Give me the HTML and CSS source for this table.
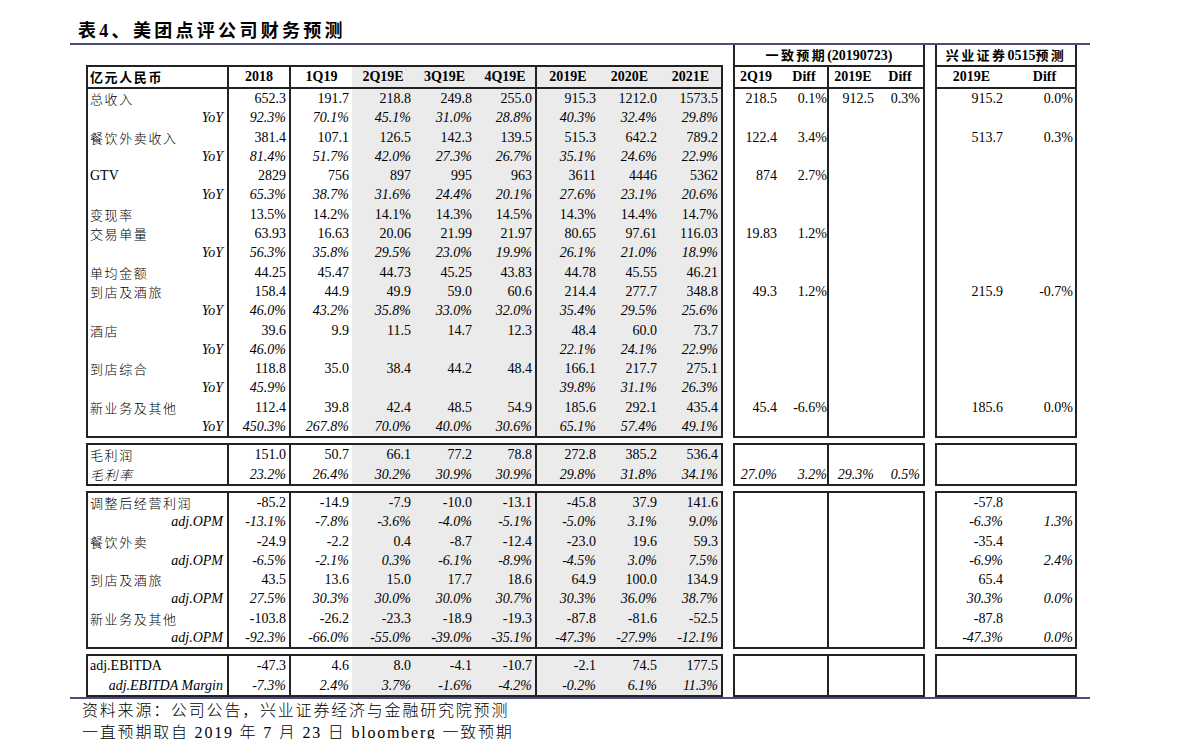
FILE: index.html
```html
<!DOCTYPE html>
<html lang="zh">
<head>
<meta charset="utf-8">
<title>表4、美团点评公司财务预测</title>
<link rel="stylesheet" href="styles.css">
</head>
<body>
<div class="page">
  <h1 class="title">表4、美团点评公司财务预测</h1>
  <div class="rule"></div>
  <div class="body">
    <div class="main">
      <div class="grid L">
        <div class="r h"><div><span class="c">亿元人民币</span></div><div>2018</div><div>1Q19</div><div>2Q19E</div><div>3Q19E</div><div>4Q19E</div><div>2019E</div><div>2020E</div><div>2021E</div></div>
        <div class="r"><div><span class="c">总收入</span></div><div>652.3</div><div>191.7</div><div>218.8</div><div>249.8</div><div>255.0</div><div>915.3</div><div>1212.0</div><div>1573.5</div></div>
        <div class="r y"><div>YoY</div><div>92.3%</div><div>70.1%</div><div>45.1%</div><div>31.0%</div><div>28.8%</div><div>40.3%</div><div>32.4%</div><div>29.8%</div></div>
        <div class="r"><div><span class="c">餐饮外卖收入</span></div><div>381.4</div><div>107.1</div><div>126.5</div><div>142.3</div><div>139.5</div><div>515.3</div><div>642.2</div><div>789.2</div></div>
        <div class="r y"><div>YoY</div><div>81.4%</div><div>51.7%</div><div>42.0%</div><div>27.3%</div><div>26.7%</div><div>35.1%</div><div>24.6%</div><div>22.9%</div></div>
        <div class="r"><div>GTV</div><div>2829</div><div>756</div><div>897</div><div>995</div><div>963</div><div>3611</div><div>4446</div><div>5362</div></div>
        <div class="r y"><div>YoY</div><div>65.3%</div><div>38.7%</div><div>31.6%</div><div>24.4%</div><div>20.1%</div><div>27.6%</div><div>23.1%</div><div>20.6%</div></div>
        <div class="r"><div><span class="c">变现率</span></div><div>13.5%</div><div>14.2%</div><div>14.1%</div><div>14.3%</div><div>14.5%</div><div>14.3%</div><div>14.4%</div><div>14.7%</div></div>
        <div class="r"><div><span class="c">交易单量</span></div><div>63.93</div><div>16.63</div><div>20.06</div><div>21.99</div><div>21.97</div><div>80.65</div><div>97.61</div><div>116.03</div></div>
        <div class="r y"><div>YoY</div><div>56.3%</div><div>35.8%</div><div>29.5%</div><div>23.0%</div><div>19.9%</div><div>26.1%</div><div>21.0%</div><div>18.9%</div></div>
        <div class="r"><div><span class="c">单均金额</span></div><div>44.25</div><div>45.47</div><div>44.73</div><div>45.25</div><div>43.83</div><div>44.78</div><div>45.55</div><div>46.21</div></div>
        <div class="r"><div><span class="c">到店及酒旅</span></div><div>158.4</div><div>44.9</div><div>49.9</div><div>59.0</div><div>60.6</div><div>214.4</div><div>277.7</div><div>348.8</div></div>
        <div class="r y"><div>YoY</div><div>46.0%</div><div>43.2%</div><div>35.8%</div><div>33.0%</div><div>32.0%</div><div>35.4%</div><div>29.5%</div><div>25.6%</div></div>
        <div class="r"><div><span class="c">酒店</span></div><div>39.6</div><div>9.9</div><div>11.5</div><div>14.7</div><div>12.3</div><div>48.4</div><div>60.0</div><div>73.7</div></div>
        <div class="r y"><div>YoY</div><div>46.0%</div><div></div><div></div><div></div><div></div><div>22.1%</div><div>24.1%</div><div>22.9%</div></div>
        <div class="r"><div><span class="c">到店综合</span></div><div>118.8</div><div>35.0</div><div>38.4</div><div>44.2</div><div>48.4</div><div>166.1</div><div>217.7</div><div>275.1</div></div>
        <div class="r y"><div>YoY</div><div>45.9%</div><div></div><div></div><div></div><div></div><div>39.8%</div><div>31.1%</div><div>26.3%</div></div>
        <div class="r"><div><span class="c">新业务及其他</span></div><div>112.4</div><div>39.8</div><div>42.4</div><div>48.5</div><div>54.9</div><div>185.6</div><div>292.1</div><div>435.4</div></div>
        <div class="r y"><div>YoY</div><div>450.3%</div><div>267.8%</div><div>70.0%</div><div>40.0%</div><div>30.6%</div><div>65.1%</div><div>57.4%</div><div>49.1%</div></div>
      </div>

      <div class="grid L">
        <div class="r"><div><span class="c">毛利润</span></div><div>151.0</div><div>50.7</div><div>66.1</div><div>77.2</div><div>78.8</div><div>272.8</div><div>385.2</div><div>536.4</div></div>
        <div class="r y yl"><div><span class="c">毛利率</span></div><div>23.2%</div><div>26.4%</div><div>30.2%</div><div>30.9%</div><div>30.9%</div><div>29.8%</div><div>31.8%</div><div>34.1%</div></div>
      </div>

      <div class="grid L">
        <div class="r"><div><span class="c">调整后经营利润</span></div><div>-85.2</div><div>-14.9</div><div>-7.9</div><div>-10.0</div><div>-13.1</div><div>-45.8</div><div>37.9</div><div>141.6</div></div>
        <div class="r y"><div>adj.OPM</div><div>-13.1%</div><div>-7.8%</div><div>-3.6%</div><div>-4.0%</div><div>-5.1%</div><div>-5.0%</div><div>3.1%</div><div>9.0%</div></div>
        <div class="r"><div><span class="c">餐饮外卖</span></div><div>-24.9</div><div>-2.2</div><div>0.4</div><div>-8.7</div><div>-12.4</div><div>-23.0</div><div>19.6</div><div>59.3</div></div>
        <div class="r y"><div>adj.OPM</div><div>-6.5%</div><div>-2.1%</div><div>0.3%</div><div>-6.1%</div><div>-8.9%</div><div>-4.5%</div><div>3.0%</div><div>7.5%</div></div>
        <div class="r"><div><span class="c">到店及酒旅</span></div><div>43.5</div><div>13.6</div><div>15.0</div><div>17.7</div><div>18.6</div><div>64.9</div><div>100.0</div><div>134.9</div></div>
        <div class="r y"><div>adj.OPM</div><div>27.5%</div><div>30.3%</div><div>30.0%</div><div>30.0%</div><div>30.7%</div><div>30.3%</div><div>36.0%</div><div>38.7%</div></div>
        <div class="r"><div><span class="c">新业务及其他</span></div><div>-103.8</div><div>-26.2</div><div>-23.3</div><div>-18.9</div><div>-19.3</div><div>-87.8</div><div>-81.6</div><div>-52.5</div></div>
        <div class="r y"><div>adj.OPM</div><div>-92.3%</div><div>-66.0%</div><div>-55.0%</div><div>-39.0%</div><div>-35.1%</div><div>-47.3%</div><div>-27.9%</div><div>-12.1%</div></div>
      </div>

      <div class="grid L">
        <div class="r"><div>adj.EBITDA</div><div>-47.3</div><div>4.6</div><div>8.0</div><div>-4.1</div><div>-10.7</div><div>-2.1</div><div>74.5</div><div>177.5</div></div>
        <div class="r y"><div>adj.EBITDA Margin</div><div>-7.3%</div><div>2.4%</div><div>3.7%</div><div>-1.6%</div><div>-4.2%</div><div>-0.2%</div><div>6.1%</div><div>11.3%</div></div>
      </div>
    </div>

    <div class="side cons">
      <div class="box first">
        <div class="bt"><span class="c">一致预期</span>(20190723)</div>
        <div class="rr sh"><span>2Q19</span><span>Diff</span><span>2019E</span><span>Diff</span></div>
        <div class="rr"><span>218.5</span><span>0.1%</span><span>912.5</span><span>0.3%</span></div>
        <div class="rr"></div>
        <div class="rr"><span>122.4</span><span>3.4%</span></div>
        <div class="rr"></div>
        <div class="rr"><span>874</span><span>2.7%</span></div>
        <div class="rr"></div>
        <div class="rr"></div>
        <div class="rr"><span>19.83</span><span>1.2%</span></div>
        <div class="rr"></div>
        <div class="rr"></div>
        <div class="rr"><span>49.3</span><span>1.2%</span></div>
        <div class="rr"></div>
        <div class="rr"></div>
        <div class="rr"></div>
        <div class="rr"></div>
        <div class="rr"></div>
        <div class="rr"><span>45.4</span><span>-6.6%</span></div>
        <div class="rr"></div>
      </div>
      <div class="box">
        <div class="rr"></div>
        <div class="rr it"><span>27.0%</span><span>3.2%</span><span>29.3%</span><span>0.5%</span></div>
      </div>
      <div class="box">
        <div class="rr"></div><div class="rr"></div><div class="rr"></div><div class="rr"></div>
        <div class="rr"></div><div class="rr"></div><div class="rr"></div><div class="rr"></div>
      </div>
      <div class="box">
        <div class="rr"></div><div class="rr"></div>
      </div>
    </div>

    <div class="side xy">
      <div class="box first">
        <div class="bt"><span class="c">兴业证券</span>0515<span class="c">预测</span></div>
        <div class="rr sh"><span>2019E</span><span>Diff</span></div>
        <div class="rr"><span>915.2</span><span>0.0%</span></div>
        <div class="rr"></div>
        <div class="rr"><span>513.7</span><span>0.3%</span></div>
        <div class="rr"></div><div class="rr"></div><div class="rr"></div><div class="rr"></div>
        <div class="rr"></div><div class="rr"></div><div class="rr"></div>
        <div class="rr"><span>215.9</span><span>-0.7%</span></div>
        <div class="rr"></div><div class="rr"></div><div class="rr"></div><div class="rr"></div><div class="rr"></div>
        <div class="rr"><span>185.6</span><span>0.0%</span></div>
        <div class="rr"></div>
      </div>
      <div class="box">
        <div class="rr"></div><div class="rr"></div>
      </div>
      <div class="box">
        <div class="rr"><span>-57.8</span></div>
        <div class="rr it"><span>-6.3%</span><span>1.3%</span></div>
        <div class="rr"><span>-35.4</span></div>
        <div class="rr it"><span>-6.9%</span><span>2.4%</span></div>
        <div class="rr"><span>65.4</span></div>
        <div class="rr it"><span>30.3%</span><span>0.0%</span></div>
        <div class="rr"><span>-87.8</span></div>
        <div class="rr it"><span>-47.3%</span><span>0.0%</span></div>
      </div>
      <div class="box">
        <div class="rr"></div><div class="rr"></div>
      </div>
    </div>
  </div>
  <div class="rule"></div>
  <div class="src">
    <p class="l1">资料来源：公司公告，兴业证券经济与金融研究院预测</p>
    <p class="l2">一直预期取自 2019 年 7 月 23 日 bloomberg 一致预期</p>
  </div>
</div>
</body>
</html>
```

FILE: styles.css
```css
* { box-sizing: border-box; }
html, body { margin: 0; padding: 0; background: #fff; }
body {
  font-family: "Liberation Serif", "Noto Sans CJK SC", serif;
  color: #000;
  overflow: hidden;
}
.page { width: 1191px; height: 739px; padding-left: 70px; overflow: hidden; }
.title {
  margin: 0;
  height: 43px;
  padding: 19px 0 0 8px;
  font-size: 18px;
  line-height: 24px;
  font-weight: bold;
  letter-spacing: 3.3px;
  font-family: "Liberation Serif", "Noto Sans CJK SC", sans-serif;
}
.rule { width: 1020px; height: 2px; background: #4b4b7d; }
.body { display: flex; align-items: flex-start; padding-left: 16px; }
.main { width: 637px; margin-top: 20px; display: flex; flex-direction: column; gap: 5px; }

.c {
  font-family: "Noto Sans CJK SC", sans-serif;
  font-size: 13px;
  letter-spacing: 1.6px;
  font-weight: 300;
  vertical-align: 1px;
}

.grid.L {
  display: grid;
  grid-template-columns: 141px 62px 61px 62px 61px 62px 62px 61px 61px;
  border: 2px solid #222;
}
.r { display: contents; }
.L .r > div {
  height: 19.3px;
  line-height: 19.3px;
  font-size: 14px;
  text-align: right;
  padding-right: 3px;
  white-space: nowrap;
}
.L .r > div:nth-child(1),
.L .r > div:nth-child(2),
.L .r > div:nth-child(6) { border-right: 2px solid #222; }
.L .r > div:nth-child(n+4) { background: #ebebeb; }
.L .r > div:first-child { text-align: left; padding-left: 2px; }
.L .r.y > div { font-style: italic; }
.L .r.y > div:first-child { text-align: right; padding-right: 4px; }
.L .r.yl > div:first-child { text-align: left; padding-left: 2px; }
.L .r.h > div {
  height: 22px;
  line-height: 20px;
  border-bottom: 2px solid #222;
  font-weight: bold;
  text-align: center;
  padding-right: 0;
}
.L .r.h > div:first-child { text-align: left; padding-left: 2px; }
.L .r.h .c { font-weight: bold; vertical-align: 0; }

.side { display: flex; flex-direction: column; gap: 5px; margin-left: 10px; }
.cons { width: 192px; }
.xy { width: 142px; }
.box { border: 2px solid #222; }
.box.first { border-top: none; }
.cons .box {
  background: linear-gradient(to right, transparent 92px, #222 92px, #222 94px, transparent 94px);
}
.bt {
  height: 22px;
  line-height: 20px;
  border-bottom: 2px solid #222;
  background: #fff;
  text-align: center;
  font-weight: bold;
  font-size: 14px;
}
.bt .c { font-weight: bold; font-size: 13px; letter-spacing: 2.4px; vertical-align: 0; }
.rr { display: grid; height: 19.3px; line-height: 19.3px; font-size: 14px; white-space: nowrap; }
.cons .rr { grid-template-columns: 46px 48px 48px 46px; }
.xy .rr { grid-template-columns: 69px 69px; }
.rr > span { text-align: right; padding-right: 3px; }
.cons .rr > span:nth-child(1) { padding-right: 4px; }
.cons .rr > span:nth-child(2) { padding-right: 2px; }
.xy .rr > span:nth-child(2) { padding-right: 2px; }
.rr.it > span { font-style: italic; }
.rr.sh {
  height: 22px;
  line-height: 20px;
  border-bottom: 2px solid #222;
  font-weight: bold;
  background: #fff;
}
.cons .rr.sh { background: linear-gradient(to right, transparent 92px, #222 92px, #222 94px, transparent 94px), #fff; }
.rr.sh > span { text-align: center; padding-right: 0; }
.xy .rr.sh > span:nth-child(2) { padding-left: 10px; }

.src { padding-left: 12px; }
.src p {
  margin: 0;
  height: 22px;
  line-height: 22px;
  font-size: 16px;
  font-weight: 300;
  letter-spacing: 1.8px;
  font-family: "Liberation Serif", "Noto Sans CJK SC", serif;
  white-space: nowrap;
}
.src .l1 { margin-top: 1px; }
```
